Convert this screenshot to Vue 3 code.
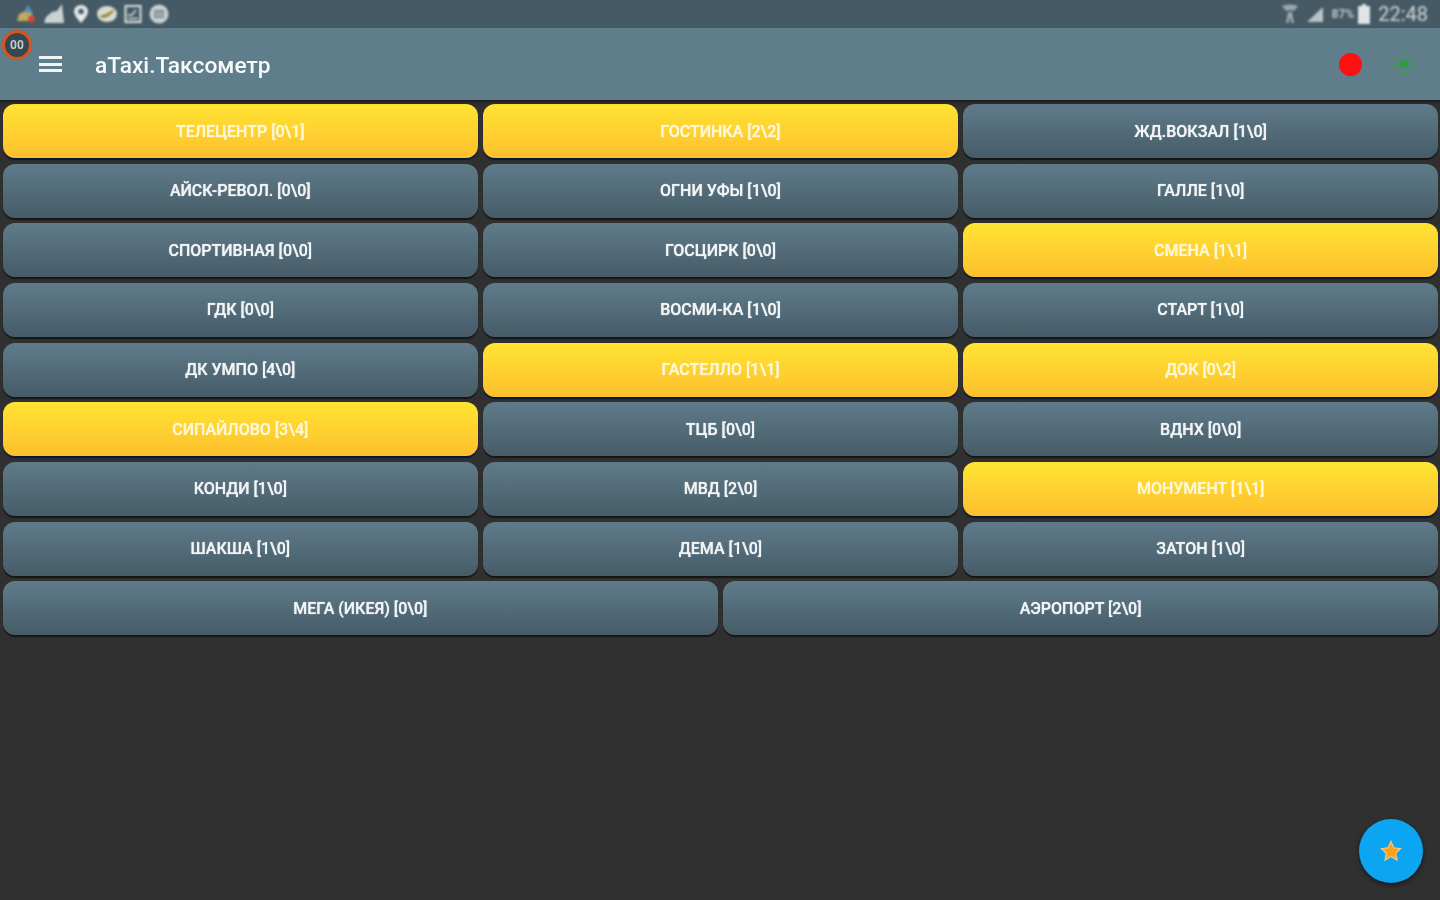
<script setup>
const stands = [
  { name: "ТЕЛЕЦЕНТР [0\\1]", on: true },
  { name: "ГОСТИНКА [2\\2]", on: true },
  { name: "ЖД.ВОКЗАЛ [1\\0]" },
  { name: "АЙСК-РЕВОЛ. [0\\0]" },
  { name: "ОГНИ УФЫ [1\\0]" },
  { name: "ГАЛЛЕ [1\\0]" },
  { name: "СПОРТИВНАЯ [0\\0]" },
  { name: "ГОСЦИРК [0\\0]" },
  { name: "СМЕНА [1\\1]", on: true },
  { name: "ГДК [0\\0]" },
  { name: "ВОСМИ-КА [1\\0]" },
  { name: "СТАРТ [1\\0]" },
  { name: "ДК УМПО [4\\0]" },
  { name: "ГАСТЕЛЛО [1\\1]", on: true },
  { name: "ДОК [0\\2]", on: true },
  { name: "СИПАЙЛОВО [3\\4]", on: true },
  { name: "ТЦБ [0\\0]" },
  { name: "ВДНХ [0\\0]" },
  { name: "КОНДИ [1\\0]" },
  { name: "МВД [2\\0]" },
  { name: "МОНУМЕНТ [1\\1]", on: true },
  { name: "ШАКША [1\\0]" },
  { name: "ДЕМА [1\\0]" },
  { name: "ЗАТОН [1\\0]" },
  { name: "МЕГА (ИКЕЯ) [0\\0]", wide: true },
  { name: "АЭРОПОРТ [2\\0]", wide: true },
];
</script>

<template>
  <div class="screen">
    <div class="status">
      <div class="status-icons">
        <svg width="20" height="20" viewBox="0 0 20 20">
          <path d="M1 17 L3 10 L9 7 L12 1 L16 8 L16 17 Z" fill="#c4a862" />
          <path d="M8 7 L12 1 L16 8 L12 9 Z" fill="#4a8fc4" />
          <circle cx="15.500" cy="15" r="3.500" fill="#d0493a" />
        </svg>
        <svg width="22" height="22" viewBox="0 0 22 22">
          <path d="M1 20 L3 14 L9 9 L14 8 L19 1 L21 20 Z" fill="#ccd2d3" />
        </svg>
        <svg width="18" height="20" viewBox="0 0 18 20">
          <path d="M9 1 C4.600 1 2 4 2 7.500 C2 12 9 19 9 19 C9 19 16 12 16 7.500 C16 4 13.400 1 9 1 Z" fill="#e3e7e8" />
          <circle cx="9" cy="7.500" r="2.800" fill="#47606e" />
        </svg>
        <svg width="20" height="18" viewBox="0 0 20 18">
          <ellipse cx="10" cy="9" rx="10" ry="8" fill="#d8dbd0" />
          <path d="M3 11 C7 10 12 8 17 4 C16 9 11 12 5 13 Z" fill="#8f8120" />
        </svg>
        <svg width="18" height="20" viewBox="0 0 18 20">
          <rect x="1.500" y="2" width="15" height="16" fill="none" stroke="#dde2e3" stroke-width="2" />
          <path d="M4 11 L8 11 L12 6 M4 14.500 L14 14.500" fill="none" stroke="#dde2e3" stroke-width="1.400" />
        </svg>
        <svg width="20" height="20" viewBox="0 0 20 20">
          <circle cx="10" cy="10" r="9.500" fill="#c7cfd2" />
          <rect x="5" y="6" width="10" height="8" rx="1" fill="#7d8e96" />
          <path d="M6 9 H14 M6 11.500 H14" stroke="#c7cfd2" stroke-width="1" />
        </svg>
      </div>
      <div class="status-right">
        <svg width="18" height="20" viewBox="0 0 18 20">
          <path d="M1 2 C6 0 12 0 17 2 L13 7 C11 6 7 6 5 7 Z" fill="#9aa7ac" />
          <path d="M7 8 H11 L13 19 H10.500 L9 13 L7.500 19 H5 Z" fill="#9aa7ac" />
        </svg>
        <svg width="17" height="17" viewBox="0 0 17 17" class="signal">
          <path d="M0 16 L16 1 V16 Z" fill="#b9c3c7" />
        </svg>
        <span class="pct">87%</span>
        <svg width="12" height="20" viewBox="0 0 12 20" class="batt">
          <path d="M4 0 H8 V2 H12 V20 H0 V2 H4 Z" fill="#dfe4e6" />
        </svg>
        <span class="clock">22:48</span>
      </div>
    </div>

    <header class="appbar">
      <div class="menu"><i></i><i></i><i></i></div>
      <div class="title">aTaxi.Таксометр</div>
      <span class="red-dot"></span>
      <svg class="gps" width="26" height="26" viewBox="0 0 26 26">
        <circle cx="13" cy="13" r="9" fill="none" stroke="#3f9a4f" stroke-width="1.500" />
        <path d="M13 1 V5 M13 21 V25 M1 13 H5 M21 13 H25" stroke="#3f9a4f" stroke-width="1.500" />
        <circle cx="13" cy="13" r="4" fill="#2e9a3e" />
      </svg>
    </header>

    <main class="grid">
      <button
        v-for="s in stands"
        :key="s.name"
        :class="['stand', { on: s.on, wide: s.wide }]"
      >
        <span>{{ s.name }}</span>
      </button>
    </main>

    <div class="overlay-timer">
      <span>00</span>
    </div>

    <button class="fab">
      <svg width="24" height="24" viewBox="0 0 24 24">
        <path
          d="M12 2.500 L14.900 8.800 L21.600 9.600 L16.600 14.200 L18 21 L12 17.600 L6 21 L7.400 14.200 L2.400 9.600 L9.100 8.800 Z"
          fill="#ffa117"
          stroke="#f5c98a"
          stroke-width="1.200"
        />
      </svg>
    </button>
  </div>
</template>

<style>
html,
body {
  margin: 0;
  background: #303030;
}
</style>

<style scoped>
.screen {
  position: relative;
  width: 1440px;
  height: 900px;
  overflow: hidden;
  background: #303030;
  font-family: Roboto, "Liberation Sans", sans-serif;
}

.status {
  height: 28px;
  background: #455a64;
  display: flex;
  align-items: center;
  justify-content: space-between;
  padding: 0 12px 0 16px;
}

.status-icons {
  display: flex;
  align-items: center;
  gap: 7px;
  filter: blur(0.8px);
}

.status-right {
  display: flex;
  align-items: center;
  filter: blur(0.8px);
}

.signal {
  margin-left: 8px;
}

.pct {
  margin-left: 8px;
  font-size: 12px;
  font-weight: 700;
  color: #b9c3c7;
}

.batt {
  margin-left: 4px;
}

.clock {
  margin-left: 8px;
  font-size: 20px;
  color: #cfd6d9;
}

.appbar {
  height: 72px;
  background: #607d8b;
  display: flex;
  align-items: center;
  padding: 0 23px 0 39px;
  box-shadow: 0 2px 3px rgba(0, 0, 0, 0.5);
  position: relative;
}

.menu {
  width: 23px;
  display: flex;
  flex-direction: column;
  gap: 3.5px;
  filter: blur(0.5px);
}

.menu i {
  display: block;
  height: 3px;
  background: #f2f5f6;
}

.title {
  margin: 3px 0 0 33px;
  font-size: 22.75px;
  font-weight: 500;
  color: #f8fafa;
  filter: blur(0.6px);
  flex: 1;
}

.red-dot {
  width: 23px;
  height: 23px;
  border-radius: 50%;
  background: #ff1010;
  margin-right: 29px;
  filter: blur(0.4px);
}

.gps {
  filter: blur(0.6px);
}

.grid {
  display: grid;
  grid-template-columns: repeat(6, 1fr);
  grid-auto-rows: 54px;
  column-gap: 5.5px;
  row-gap: 5.67px;
  padding: 4px 2px 0 3px;
}

.stand {
  grid-column: span 2;
  border: 0;
  padding: 0;
  border-radius: 12px;
  background: linear-gradient(#5f7b8a, #465c68);
  box-shadow: 0 2px 1px rgba(0, 0, 0, 0.55);
  color: #f2f4f5;
  font-family: inherit;
  font-size: 16px;
  font-weight: 500;
}

.stand span {
  display: block;
  filter: blur(0.6px);
  text-shadow: 0 0 1px currentColor;
}

.stand.wide {
  grid-column: span 3;
}

.stand.on {
  background: linear-gradient(#ffe433, #fdbf2d);
  box-shadow: 0 2px 1px rgba(0, 20, 60, 0.9);
  color: #fff8d8;
}

.overlay-timer {
  position: absolute;
  left: 2px;
  top: 30px;
  width: 24px;
  height: 24px;
  border: 3px solid #d9531e;
  border-radius: 50%;
  background: #37474f;
  display: flex;
  align-items: center;
  justify-content: center;
  filter: blur(0.7px);
}

.overlay-timer span {
  font-size: 12px;
  font-weight: 700;
  color: #c5ccd0;
}

.fab {
  position: absolute;
  left: 1359px;
  top: 819px;
  width: 64px;
  height: 64px;
  border: 0;
  padding: 0;
  border-radius: 50%;
  background: #0ba5f2;
  box-shadow: 0 2px 5px rgba(0, 0, 0, 0.5);
  display: flex;
  align-items: center;
  justify-content: center;
}

.fab svg {
  filter: blur(0.6px);
}
</style>
